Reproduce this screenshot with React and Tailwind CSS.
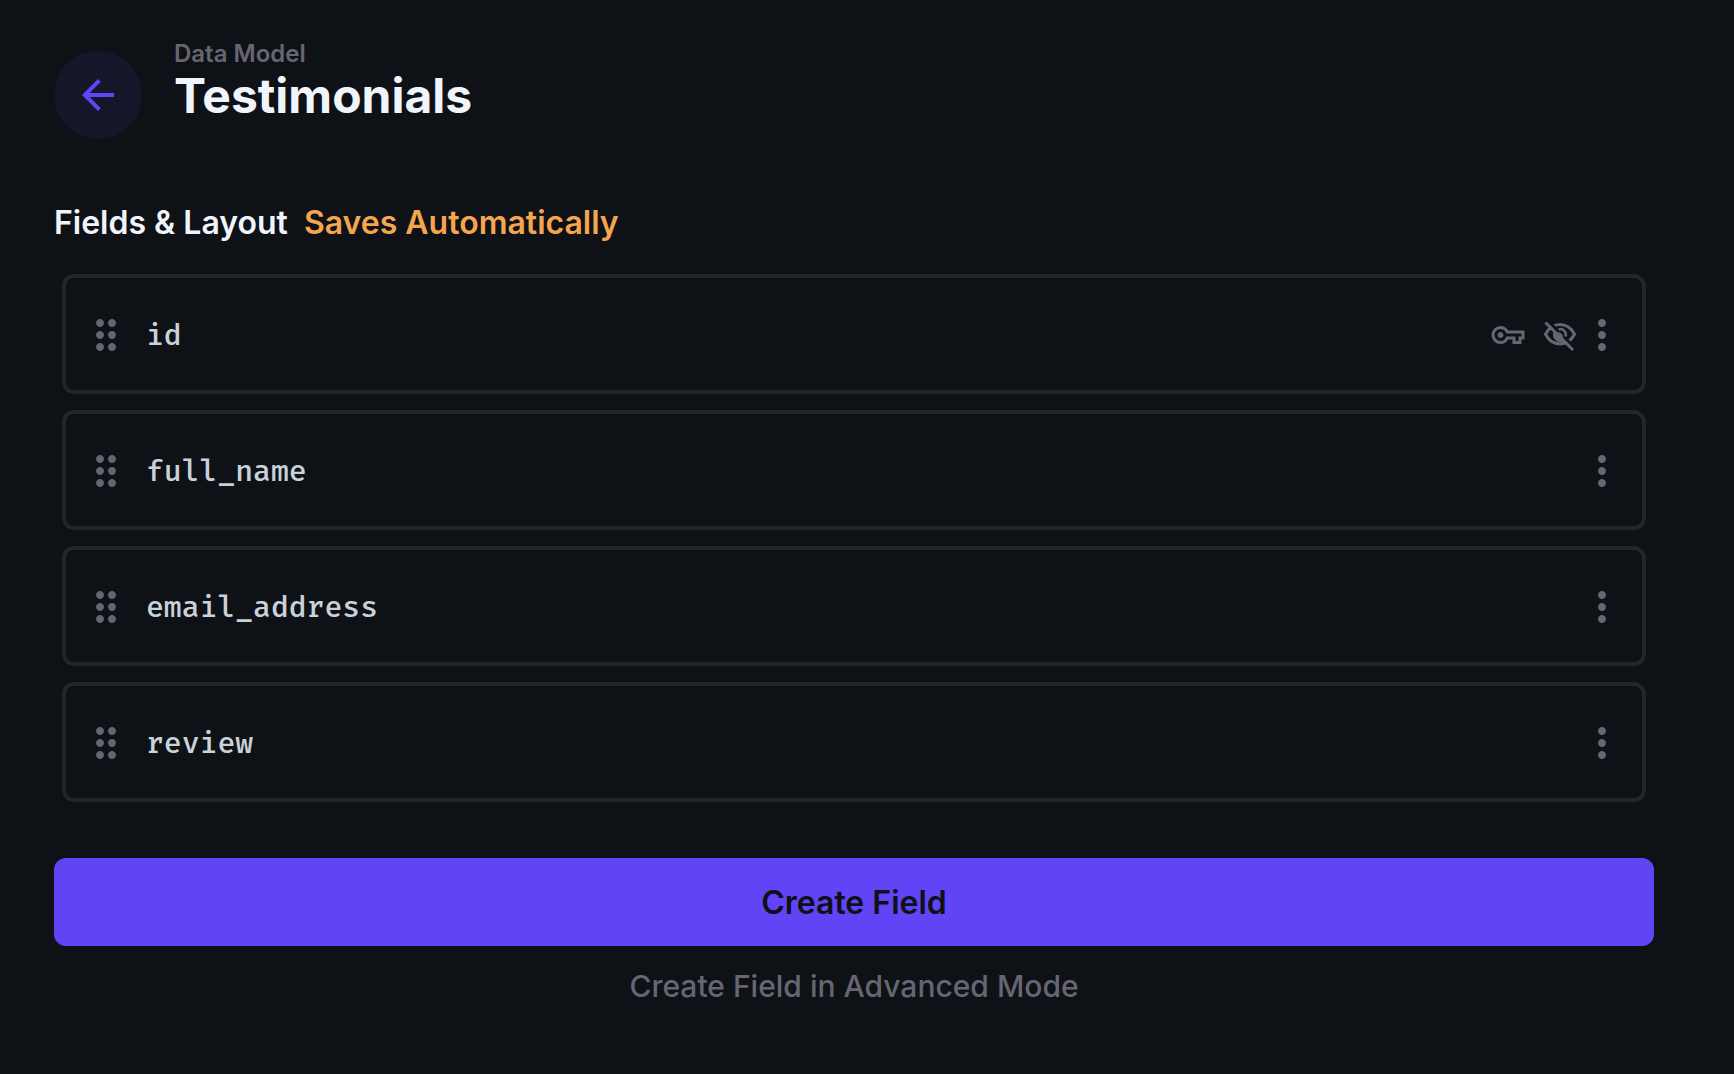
import { MdArrowBack, MdDragIndicator, MdMoreVert } from "react-icons/md";

const fields = [
  { name: "id", primary: true, hidden: true },
  { name: "full_name" },
  { name: "email_address" },
  { name: "review" },
];

function KeyIcon({ className }) {
  return (
    <svg viewBox="0 -960 960 960" fill="currentColor" className={className} role="img" aria-label="Primary key">
      <path d="M280-240q-100 0-170-70T40-480q0-100 70-170t170-70q66 0 121 33t87 87h432v240h-80v120H600v-120H488q-32 54-87 87t-121 33Zm0-80q66 0 106-40.500t48-79.500h246v120h80v-120h80v-80H434q-8-39-48-79.500T280-640q-66 0-113 47t-47 113q0 66 47 113t113 47Zm0-80q33 0 56.500-23.500T360-480q0-33-23.500-56.500T280-560q-33 0-56.500 23.500T200-480q0 33 23.500 56.500T280-400Z" />
    </svg>
  );
}

function HiddenIcon({ className }) {
  return (
    <svg viewBox="0 0 36 36" fill="none" stroke="currentColor" className={className} role="img" aria-label="Hidden field">
      <mask id="slash-gap" maskUnits="userSpaceOnUse" x="0" y="0" width="36" height="36">
        <path d="M0 0h36v36H0z" fill="#fff" stroke="none" />
        <path d="M3 1l32 32" stroke="#000" strokeWidth="3" />
      </mask>
      <g mask="url(#slash-gap)">
        <path
          d="M3.500 17.200C7 10.500 12 7.500 18 7.500s11 3 14.500 9.700C29 23.900 24 26.900 18 26.900S7 23.900 3.500 17.200Z"
          strokeWidth="3"
        />
      </g>
      <path d="M12.800 14a6.900 6.900 0 0 0 9.600 9.600Z" fill="currentColor" strokeWidth="1" />
      <path d="M16.500 12.400a5.500 5.500 0 0 1 6.900 7.200" strokeWidth="2.600" />
      <path d="M15.500 16q4.500-1 5 4.500Z" fill="currentColor" strokeWidth="1" />
      <path d="M3.500 5.500L31 33" strokeWidth="3" />
    </svg>
  );
}

function FieldRow({ field }) {
  return (
    <li className="flex h-30 items-center rounded-xl border-4 border-[#22252a] px-4 pt-0.5 text-[#666672]">
      <button type="button" aria-label={`Reorder ${field.name}`} className="cursor-grab">
        <MdDragIndicator size={48} />
      </button>
      <span className="ml-4 flex-1 pt-0.5 font-['Fira_Code','DejaVu_Sans_Mono',monospace] text-[29px] leading-10 font-medium text-[#c9d1d9]">
        {field.name}
      </span>
      <div className="flex items-center">
        {field.primary && <KeyIcon className="mr-4 size-9" />}
        {field.hidden && <HiddenIcon className="size-9" />}
        <button type="button" aria-label={`Options for ${field.name}`}>
          <MdMoreVert size={48} />
        </button>
      </div>
    </li>
  );
}

export default function App() {
  return (
    <main className="min-h-screen bg-[#0e1116] pt-10 pr-20 pb-16 pl-[54px] font-['Inter',sans-serif]">
      <header className="flex items-end gap-8">
        <button
          type="button"
          aria-label="Back"
          className="flex size-22 items-center justify-center rounded-full bg-[#16162b] text-[#6044f5]"
        >
          <MdArrowBack size={48} />
        </button>
        <div className="pb-[15px]">
          <p className="text-2xl leading-7 font-semibold text-[#666672]">Data Model</p>
          <h1 className="text-5xl leading-14 font-bold text-[#f0f4fb]">Testimonials</h1>
        </div>
      </header>

      <section>
        <h2 className="mt-16 flex gap-4 text-[32px] leading-10 font-semibold text-[#f0f4fb]">
          Fields &amp; Layout
          <span className="text-[#f4a64e]">Saves Automatically</span>
        </h2>
        <ul className="mx-2 mt-[31px] flex flex-col gap-4">
          {fields.map((field) => (
            <FieldRow key={field.name} field={field} />
          ))}
        </ul>
      </section>

      <div className="mt-14 flex flex-col items-center">
        <button type="button" className="h-22 w-full rounded-xl bg-[#6044f5] pt-0.5 text-[32px] font-semibold text-[#0e1116]">
          Create Field
        </button>
        <button type="button" className="mt-5 text-[30px] leading-10 font-medium text-[#666672]">
          Create Field in Advanced Mode
        </button>
      </div>
    </main>
  );
}
